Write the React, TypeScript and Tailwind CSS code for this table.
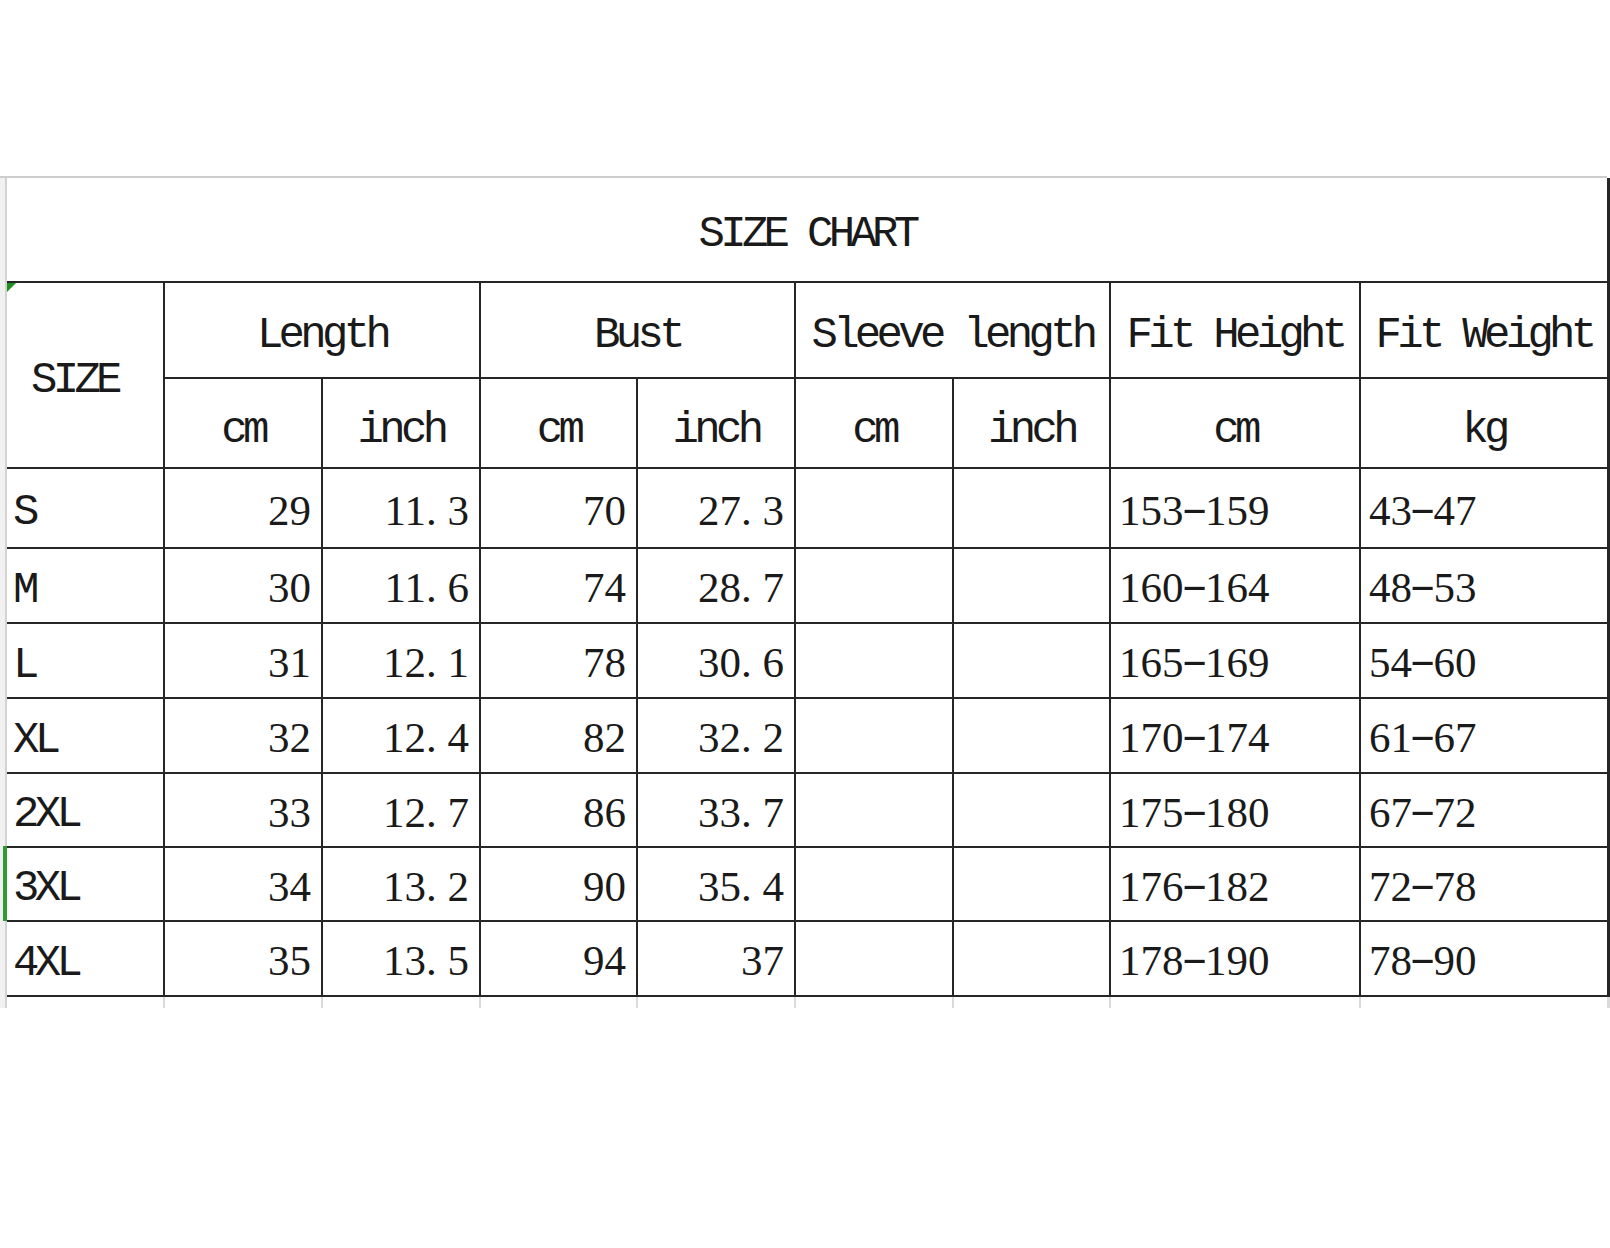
import React from 'react'

const mono = "font-['Liberation_Mono',monospace] text-[44px] tracking-[-4.7px]"
const serif = "font-['Liberation_Serif',serif] text-[43px]"

const rows = [
  ['S', '29', '11.3', '70', '27.3', '153-159', '43-47'],
  ['M', '30', '11.6', '74', '28.7', '160-164', '48-53'],
  ['L', '31', '12.1', '78', '30.6', '165-169', '54-60'],
  ['XL', '32', '12.4', '82', '32.2', '170-174', '61-67'],
  ['2XL', '33', '12.7', '86', '33.7', '175-180', '67-72'],
  ['3XL', '34', '13.2', '90', '35.4', '176-182', '72-78'],
  ['4XL', '35', '13.5', '94', '37', '178-190', '78-90'],
]

// digits keep their own width, "." and "-" get a half-em cell like the original sheet
function Num({ v }: { v: string }) {
  return (
    <>
      {v.split('').map((ch, i) =>
        /\d/.test(ch) ? (
          <React.Fragment key={i}>{ch}</React.Fragment>
        ) : ch === '-' ? (
          <span key={i} className="inline-block w-[0.5em] text-center scale-x-[1.8] -translate-y-[4px]">
            {ch}
          </span>
        ) : (
          <span key={i} className="inline-block w-[0.5em]">
            {ch}
          </span>
        )
      )}
    </>
  )
}

function Head({ children, className = '' }: { children: React.ReactNode; className?: string }) {
  return (
    <div className={`bg-white flex items-center justify-center whitespace-nowrap ${mono} ${className}`}>
      {children}
    </div>
  )
}

function LeftStrip() {
  return (
    <div className="flex w-[7px] flex-col">
      <div className="h-[668px] bg-[#f1f1f1] border-r-2 border-[#d2d2d2]" />
      <div className="h-[75px] bg-[#f1f1f1] border-r-[4px] border-[#2f9a2f]" />
      <div className="h-[87px] bg-[#f1f1f1] border-r-2 border-[#d2d2d2]" />
    </div>
  )
}

export default function App() {
  return (
    <div className="h-[1248px] w-[1610px] overflow-hidden bg-white text-[#1a1a1a]">
      <div className="h-[176px]" />
      <div className="h-[2px] w-[1607px] bg-[#cdcdcd]" />
      <div className="flex">
        <LeftStrip />
        <div className="flex flex-col">
          <div className="grid grid-cols-[156px_156px_156px_155px_156px_156px_155px_248px_246px] grid-rows-[103px_94px_88px_78px_73px_73px_73px_72px_72px_73px] gap-[2px] bg-[#262626] border-r-[3px] border-b-2 border-[#262626]">
            <Head className="col-span-9 pt-[9px]">SIZE CHART</Head>
            <Head className="relative row-span-2 justify-start pl-[24px] pt-[9px]">
              <span className="absolute left-0 top-0 border-t-[9px] border-r-[9px] border-t-[#1f8f1f] border-r-transparent" />
              SIZE
            </Head>
            <Head className="col-span-2 pt-[10px]">Length</Head>
            <Head className="col-span-2 pt-[10px]">Bust</Head>
            <Head className="col-span-2 pt-[10px]">Sleeve length</Head>
            <Head className="pt-[10px]">Fit Height</Head>
            <Head className="pt-[10px]">Fit Weight</Head>
            {['cm', 'inch', 'cm', 'inch', 'cm', 'inch', 'cm', 'kg'].map((u, i) => (
              <Head key={i} className="pt-[14px]">
                {u}
              </Head>
            ))}
            {rows.map((r) => (
              <React.Fragment key={r[0]}>
                <div className={`bg-white flex items-center pl-[6px] pt-[8px] ${mono}`}>{r[0]}</div>
                {r.slice(1, 5).map((v, i) => (
                  <div key={i} className={`bg-white flex items-center justify-end pr-[10px] pt-[6px] ${serif}`}>
                    <Num v={v} />
                  </div>
                ))}
                <div className="bg-white" />
                <div className="bg-white" />
                {r.slice(5).map((v, i) => (
                  <div key={i} className={`bg-white flex items-center pl-[8px] pt-[6px] ${serif}`}>
                    <Num v={v} />
                  </div>
                ))}
              </React.Fragment>
            ))}
          </div>
          <div className="grid h-[11px] grid-cols-[156px_156px_156px_155px_156px_156px_155px_248px_246px] gap-x-[2px] bg-[#dadada]">
            {Array.from({ length: 9 }).map((_, i) => (
              <div key={i} className="bg-white" />
            ))}
          </div>
        </div>
      </div>
    </div>
  )
}
